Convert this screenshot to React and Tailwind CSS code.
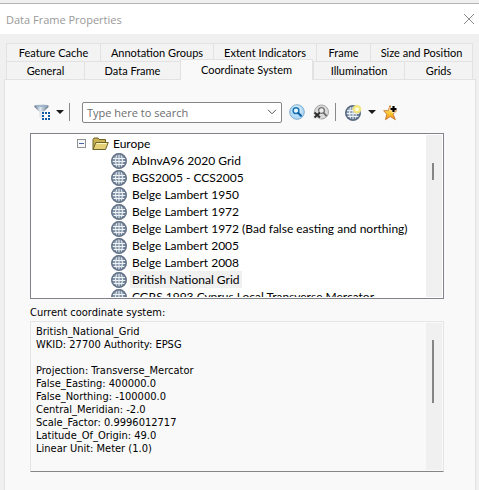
import React from "react";

const TABS_BACK = ["Feature Cache", "Annotation Groups", "Extent Indicators", "Frame", "Size and Position"];
const TABS_FRONT = ["General", "Data Frame", "Coordinate System", "Illumination", "Grids"];

const SYSTEMS = [
  "AbInvA96 2020 Grid",
  "BGS2005 - CCS2005",
  "Belge Lambert 1950",
  "Belge Lambert 1972",
  "Belge Lambert 1972 (Bad false easting and northing)",
  "Belge Lambert 2005",
  "Belge Lambert 2008",
  "British National Grid",
  "CGRS 1993 Cyprus Local Transverse Mercator",
];

const DETAILS = `British_National_Grid
WKID: 27700 Authority: EPSG

Projection: Transverse_Mercator
False_Easting: 400000.0
False_Northing: -100000.0
Central_Meridian: -2.0
Scale_Factor: 0.9996012717
Latitude_Of_Origin: 49.0
Linear Unit: Meter (1.0)`;

function Globe() {
  return (
    <svg width="16" height="16" viewBox="0 0 16 16" className="shrink-0" aria-hidden="true">
      <circle cx="8" cy="8" r="7.8" fill="#6d7d91" />
      <circle cx="7.5" cy="7.5" r="6" fill="#8595a8" />
      <g fill="none" stroke="#eef3f8" strokeWidth="1">
        <path d="M2 5.500h12M1.500 8.500h13M2.500 11.500h11" />
        <path d="M8 1.500v13" />
        <path d="M5.500 2.500Q3.500 8 5.500 13.500M10.500 2.500Q12.500 8 10.500 13.500" />
      </g>
      <circle cx="8" cy="8" r="7.300" fill="none" stroke="#66758a" strokeWidth="1.200" />
    </svg>
  );
}

function NewGlobe() {
  return (
    <svg width="17" height="17" viewBox="0 0 17 17" aria-hidden="true">
      <circle cx="8" cy="9" r="7.800" fill="#6d7f95" />
      <circle cx="6.500" cy="8" r="5" fill="#93a4b8" />
      <g fill="none" stroke="#eaf1f7" strokeWidth="1">
        <path d="M2 6.500h12M1.500 9.500h13M2.500 12.500h11" />
        <path d="M8 2.500v13" />
        <path d="M5.500 3.500Q3.500 9 5.500 14.500M10.500 3.500Q12.500 9 10.500 14.500" />
      </g>
      <circle cx="8" cy="9" r="7.200" fill="none" stroke="#53657b" strokeWidth="1.200" />
      <circle cx="12" cy="5" r="4" fill="#e9e3a0" />
      <path d="M12 .8v9M7.500 5.300h9M8.900 2.200l6.200 6.200M15.100 2.200L8.900 8.400" stroke="#f6e76c" strokeWidth="1.400" />
      <circle cx="12" cy="5.300" r="2" fill="#fffde0" />
    </svg>
  );
}

function Funnel() {
  return (
    <svg width="17" height="17" viewBox="0 0 17 17" aria-hidden="true">
      <defs>
        <linearGradient id="funnel" x1="0" x2="1">
          <stop offset="0" stopColor="#566a80" />
          <stop offset=".4" stopColor="#e4ecf3" />
          <stop offset="1" stopColor="#62778d" />
        </linearGradient>
      </defs>
      <path d="M.5 1.500Q7.500-.3 14.500 1.500v1.500L9.500 8v7.500L5.500 13V8L.5 3z" fill="url(#funnel)" />
      <ellipse cx="7.500" cy="2" rx="6" ry="1.100" fill="#9fb6cd" />
      <path d="M7.500 7.500H17V17H7.500z" fill="#f9f9f9" />
      <path
        d="M8 8h2v2H8zM11 8h2v2h-2zM14 8h2v2h-2zM8 11h2v2H8zM14 11h2v2h-2zM8 14h2v2H8zM11 14h2v2h-2zM14 14h2v2h-2z"
        fill="#0f5ba6"
      />
    </svg>
  );
}

function Search() {
  return (
    <svg width="16" height="16" viewBox="0 0 16 16" aria-hidden="true">
      <circle cx="8" cy="8" r="7.300" fill="#b0daf5" stroke="#85abcb" />
      <circle cx="7.500" cy="6.500" r="5" fill="#cfeafa" />
      <circle cx="7" cy="6.700" r="2.900" fill="#e9f7ff" stroke="#1673b8" strokeWidth="1.500" />
      <path d="M9.300 9l2.700 2.800" stroke="#0d5d9e" strokeWidth="2" strokeLinecap="round" />
    </svg>
  );
}

function ClearSearch() {
  return (
    <svg width="16" height="16" viewBox="0 0 16 16" aria-hidden="true">
      <circle cx="8.500" cy="8" r="7" fill="#dadada" stroke="#a3a3a3" />
      <circle cx="8.500" cy="6.500" r="2.900" fill="#ededed" stroke="#777" strokeWidth="1.400" />
      <path d="M10.800 9l2.400 2.600" stroke="#6a6a6a" strokeWidth="1.800" strokeLinecap="round" />
      <path d="M0 7.500h8V15H0z" fill="#e4e4e4" opacity=".6" />
      <path d="M1.500 8.500l5.500 5M7 8.500l-5.500 5" stroke="#303030" strokeWidth="2.200" />
    </svg>
  );
}

function AddFavorite() {
  return (
    <svg width="16" height="17" viewBox="0 0 16 17" aria-hidden="true">
      <defs>
        <linearGradient id="star" x1="0" x2="0" y1="0" y2="1">
          <stop offset="0" stopColor="#fff3a0" />
          <stop offset=".6" stopColor="#fcc52c" />
          <stop offset="1" stopColor="#f08a24" />
        </linearGradient>
      </defs>
      <path
        d="M7 1.500l1.900 5H14l-4 3.600 2.400 5.600L7.200 12.500 2.500 15.700l1.300-5.500L.6 6.700h4.700z"
        fill="url(#star)"
        stroke="#c9762b"
        strokeWidth=".9"
      />
      <path d="M10.500 1v8M6.500 5h8" stroke="#fff" strokeWidth="3.400" opacity=".5" />
      <path d="M10.500 2v6M7.500 5h6" stroke="#000" strokeWidth="2.200" />
    </svg>
  );
}

function Caret() {
  return (
    <svg width="8" height="4" viewBox="0 0 8 4" aria-hidden="true">
      <path d="M0 0h8L4 4z" fill="#1c1c1c" />
    </svg>
  );
}

function Folder() {
  return (
    <svg width="17" height="14" viewBox="0 0 17 14" className="shrink-0" aria-hidden="true">
      <path d="M1 12.500V2.500L2 1h4l1 1.500h6.500v3" fill="#c9b254" stroke="#6f6327" />
      <path d="M1 12.500L3.800 5.500h12.500l-2.800 7z" fill="#e3d078" stroke="#6f6327" strokeLinejoin="round" />
      <path d="M4.500 6.500h10" stroke="#fff6c0" />
    </svg>
  );
}

function Tab({ label, selected }) {
  return (
    <button
      type="button"
      role="tab"
      aria-selected={selected}
      className={
        selected
          ? "relative -mt-[2px] -mb-px whitespace-nowrap border border-b-0 border-[#e2e2e2] bg-[#f9f9f9] pb-[2px]"
          : "whitespace-nowrap border-t border-l border-[#e2e2e2] bg-[#f3f3f3] last:border-r"
      }
    >
      {label}
    </button>
  );
}

export default function App() {
  return (
    <div className="flex h-screen flex-col overflow-hidden bg-[#f0f0f0] pt-[3px] font-['Lato','Noto_Sans',sans-serif] text-[12px] leading-[17px] text-black">
      <header className="flex h-[31px] shrink-0 items-center justify-between border-t border-[#b4b4b4] bg-white pr-[5px] pl-[6px] text-[#999]">
        <h1 className="font-['Open_Sans','Noto_Sans',sans-serif] text-[11px]">Data Frame Properties</h1>
        <button type="button" aria-label="Close">
          <svg width="10" height="10" viewBox="0 0 10 10" aria-hidden="true">
            <path d="M0 0l10 10M10 0L0 10" stroke="#8a8a8a" />
          </svg>
        </button>
      </header>

      <div role="tablist" className="mt-[9px] shrink-0 px-[6px] text-[11px]">
        <div className="grid h-[18px] grid-cols-[94fr_113fr_103fr_54fr_103fr]">
          {TABS_BACK.map((t) => (
            <Tab key={t} label={t} selected={false} />
          ))}
        </div>
        <div className="grid h-[18px] grid-cols-[78fr_96fr_133fr_91fr_69fr]">
          {TABS_FRONT.map((t) => (
            <Tab key={t} label={t} selected={t === "Coordinate System"} />
          ))}
        </div>
      </div>

      <main className="mr-[3px] ml-[4px] flex grow flex-col border-x border-t border-[#e2e2e2] bg-[#f9f9f9] pt-[21px] pr-[31px] pl-[25px]">
        <div className="flex h-[22px] items-center pl-[4px]">
          <button type="button" aria-label="Filter" className="flex w-[30px] items-center justify-between">
            <Funnel />
            <Caret />
          </button>
          <span className="ml-[5px] h-[18px] w-px bg-[#8a8a8a]" />
          <div className="ml-[12px] flex h-[21px] w-[200px] items-center rounded-xs border border-[#868686] bg-white pr-[4px] pl-[4px]">
            <input
              type="text"
              aria-label="Search"
              placeholder="Type here to search"
              className="min-w-0 grow font-['Open_Sans','Noto_Sans',sans-serif] text-[11px] outline-none placeholder:text-[#6d6d6d]"
            />
            <button type="button" aria-label="Search history">
              <svg width="10" height="6" viewBox="0 0 10 6" fill="none" aria-hidden="true">
                <path d="M1 .8l4 4 4-4" stroke="#555" />
              </svg>
            </button>
          </div>
          <button type="button" aria-label="Find" className="ml-[7px]">
            <Search />
          </button>
          <button type="button" aria-label="Clear search" className="ml-[8px]">
            <ClearSearch />
          </button>
          <span className="ml-[6px] h-[18px] w-px bg-[#8a8a8a]" />
          <button type="button" aria-label="Add coordinate system" className="ml-[9px] flex w-[31px] items-center justify-between">
            <NewGlobe />
            <Caret />
          </button>
          <button type="button" aria-label="Add to favorites" className="ml-[7px]">
            <AddFavorite />
          </button>
        </div>

        <div className="mt-[10px] flex h-[166px] border border-[#82828c] bg-white p-px">
          <ul role="tree" className="grow overflow-hidden">
            <li role="treeitem" aria-expanded="true">
              <div className="flex h-[17px] items-center pl-[45px]">
                <button type="button" aria-label="Collapse" className="flex size-[9px] items-center justify-center border border-[#919191] bg-[#f8f8f8]">
                  <span className="h-px w-[5px] bg-[#4b63a7]" />
                </button>
                <span className="ml-[6px]">
                  <Folder />
                </span>
                <span className="ml-[2px] px-[2px]">Europe</span>
              </div>
              <ul role="group">
                {SYSTEMS.map((s) => (
                  <li key={s} role="treeitem" className="flex h-[17px] items-center pl-[79px]">
                    <Globe />
                    <span className={s === "British National Grid" ? "ml-[3px] bg-[#f0f0f0] px-[2px] whitespace-nowrap" : "ml-[3px] px-[2px] whitespace-nowrap"}>
                      {s}
                    </span>
                  </li>
                ))}
              </ul>
            </li>
          </ul>
          <div className="w-[16px] shrink-0 bg-[#f0f0f0] pt-[28px] pl-[6px]">
            <div className="h-[17px] w-[2px] bg-[#858585]" />
          </div>
        </div>

        <label htmlFor="details" className="mt-[5px] font-['DejaVu_Sans_Condensed','DejaVu_Sans',sans-serif] text-[11px]">
          Current coordinate system:
        </label>
        <div className="flex h-[151px] border border-[#e5e5e5] border-b-[#858585] p-px">
          <textarea
            id="details"
            readOnly
            value={DETAILS}
            className="grow resize-none overflow-hidden pt-[2px] pl-[4px] font-['DejaVu_Sans_Condensed','DejaVu_Sans',sans-serif] text-[11px] leading-[13px] outline-none"
          />
          <div className="w-[16px] shrink-0 bg-[#f0f0f0] pt-[17px] pl-[6px]">
            <div className="h-[63px] w-[2px] bg-[#858585]" />
          </div>
        </div>
      </main>
    </div>
  );
}
